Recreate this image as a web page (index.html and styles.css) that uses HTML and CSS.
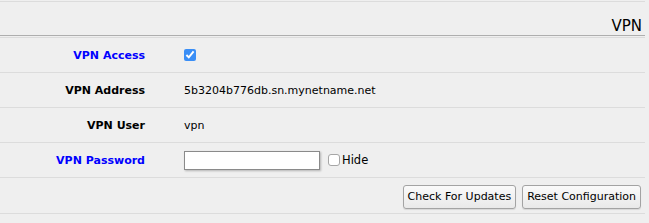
FILE: index.html
```html
<!DOCTYPE html>
<html lang="en">
<head>
    <meta charset="UTF-8">
    <title>VPN</title>
    <link rel="stylesheet" href="styles.css">
</head>
<body>
    <div class="panel">
        <div class="panel-head">VPN</div>

        <div class="rows">
            <div class="row">
                <label class="label editable" for="vpnAccess">VPN Access</label>
                <div class="value">
                    <input type="checkbox" id="vpnAccess" class="check-blue" checked>
                </div>
            </div>

            <div class="row">
                <span class="label">VPN Address</span>
                <div class="value">5b3204b776db.sn.mynetname.net</div>
            </div>

            <div class="row">
                <span class="label">VPN User</span>
                <div class="value">vpn</div>
            </div>

            <div class="row">
                <label class="label editable" for="vpnPassword">VPN Password</label>
                <div class="value">
                    <input type="password" id="vpnPassword" class="text-input">
                    <label class="hide-toggle"><input type="checkbox" class="check-plain"> Hide</label>
                </div>
            </div>

            <div class="row buttons">
                <button type="button" class="btn">Check For Updates</button>
                <button type="button" class="btn">Reset Configuration</button>
            </div>
        </div>
    </div>
</body>
</html>
```

FILE: styles.css
```css
body {
    margin: 0;
    background-color: #efefef;
    font-family: "DejaVu Sans", Verdana, sans-serif;
    font-size: 11px;
    color: #000;
}
.panel {
    width: 645px;
    margin-top: 1px;
}
.panel-head {
    border-top: 1px solid #dcdcdc;
    border-bottom: 1px solid #aeaeae;
    height: 33px;
    box-sizing: content-box;
    display: flex;
    align-items: flex-end;
    justify-content: flex-end;
    padding-right: 3px;
    font-size: 15px;
    line-height: 18px;
}
.rows {
    margin-top: 1px;
    border-top: 1px solid #dcdcdc;
}
.row {
    display: flex;
    align-items: center;
    height: 34px;
    border-bottom: 1px solid #dcdcdc;
}
.label {
    width: 145px;
    text-align: right;
    font-weight: bold;
    color: #000;
}
.label.editable {
    color: #0000ff;
}
.value {
    padding-left: 39px;
    display: flex;
    align-items: center;
}
.check-blue {
    margin: 0;
    width: 12px;
    height: 12px;
    accent-color: #3a8ef6;
}
.text-input {
    width: 136px;
    height: 19px;
    box-sizing: border-box;
    margin: 0;
    border: 1px solid #8a8a8a;
    background: #fff;
    box-shadow: 1px 1px 2px rgba(0,0,0,0.25);
    padding: 1px 3px;
}
.hide-toggle {
    display: flex;
    align-items: center;
    margin-left: 8px;
    font-size: 11.5px;
}
.check-plain {
    -webkit-appearance: none;
    appearance: none;
    margin: 0 2px 0 0;
    width: 12px;
    height: 12px;
    border: 1px solid #a6a6a6;
    border-radius: 3px;
    background: #fff;
}
.buttons {
    justify-content: flex-end;
    gap: 6px;
    height: 35px;
    padding-right: 4px;
}
.btn {
    height: 24px;
    padding: 0 4px;
    margin-top: 2px;
    font-family: "DejaVu Sans", Verdana, sans-serif;
    font-size: 11px;
    color: #000;
    background: linear-gradient(#fafafa, #e9e9e9);
    border: 1px solid #a3a3a3;
    border-radius: 3px;
    box-shadow: 0 1px 1px rgba(0,0,0,0.1);
}
```
